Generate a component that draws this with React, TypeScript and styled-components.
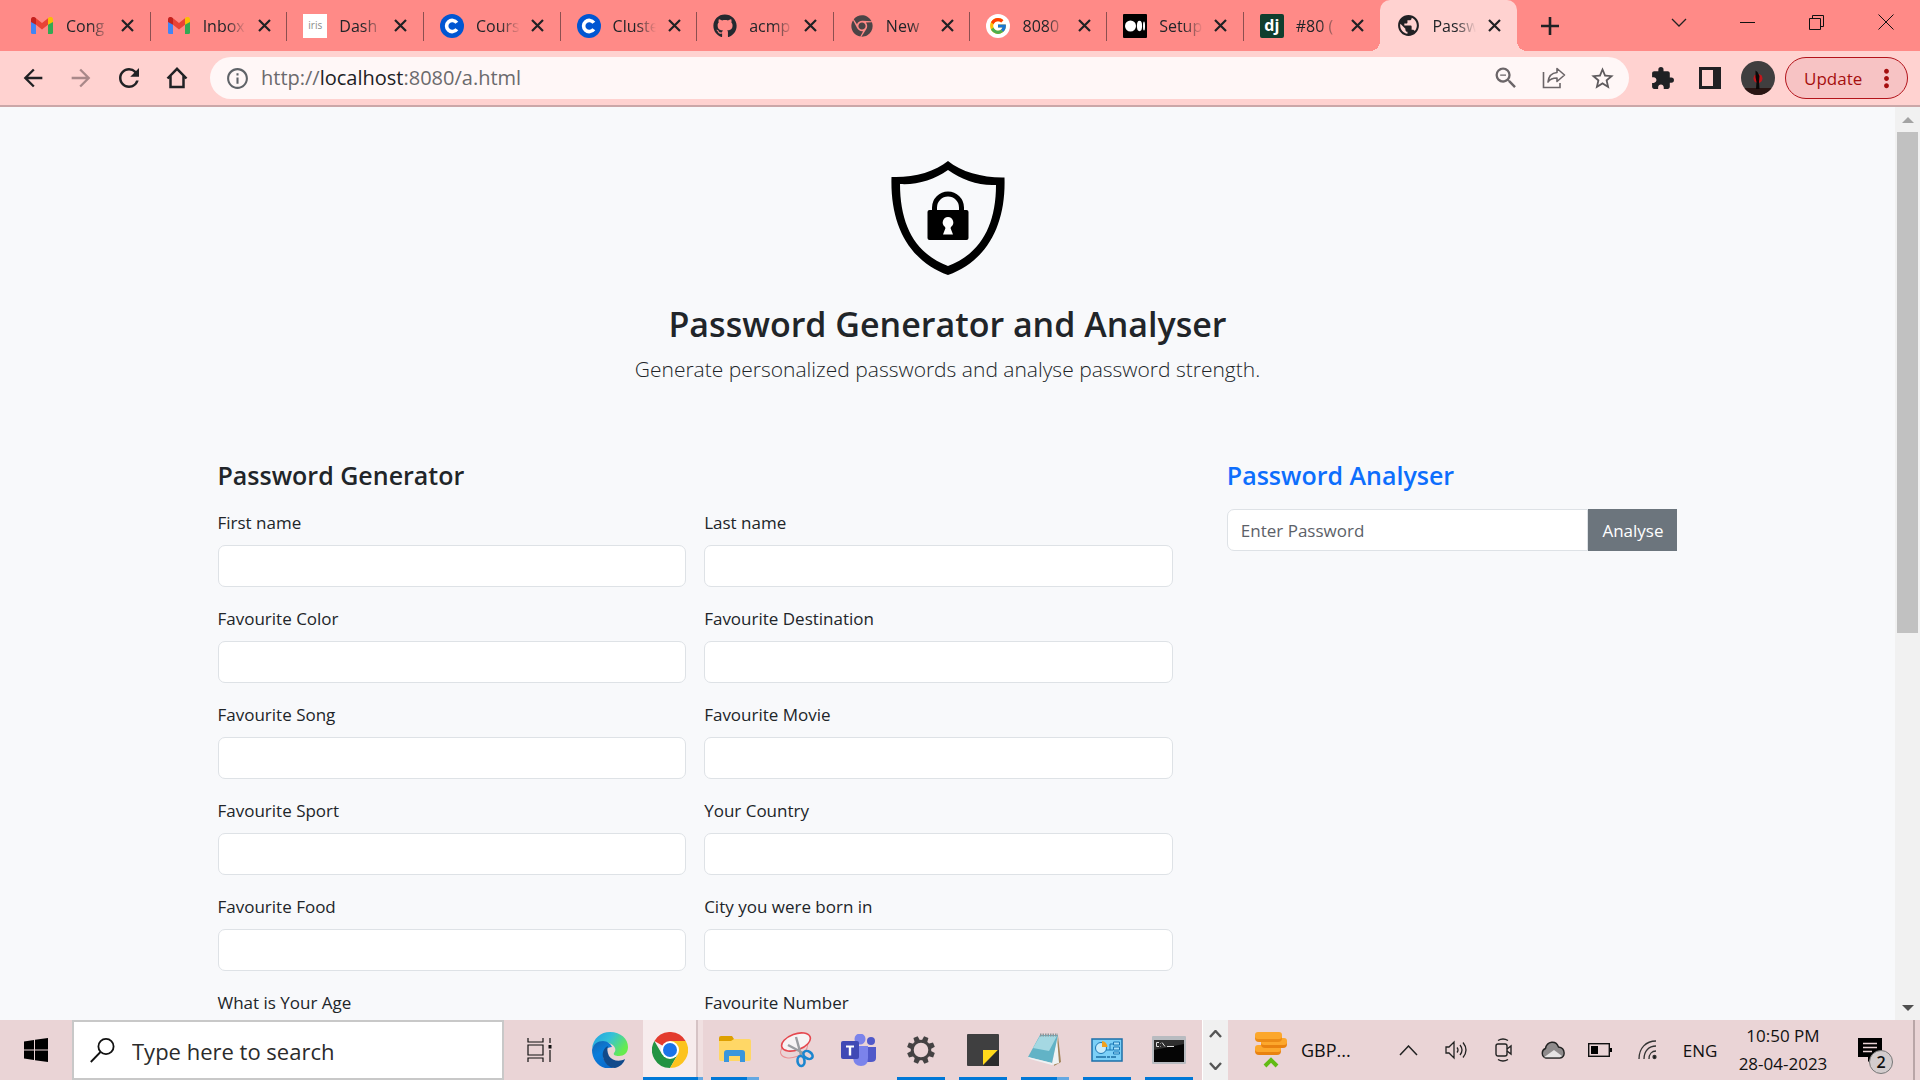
import React from 'react';
import styled, { createGlobalStyle, css } from 'styled-components';
import { FaGithub, FaChrome } from 'react-icons/fa';
import { FcGoogle } from 'react-icons/fc';
import {
  MdArrowBack, MdArrowForward, MdRefresh, MdInfoOutline, MdZoomOut,
  MdStarOutline, MdExtension, MdPublic, MdMoreVert,
} from 'react-icons/md';

const Global = createGlobalStyle`
  *, *::before, *::after { box-sizing: border-box; }
  body { margin: 0; overflow: hidden; font-family: "Open Sans", "Noto Sans", sans-serif; color: #212529; }
  button, input { font: inherit; color: inherit; }
  button { border: 0; padding: 0; background: none; cursor: pointer; }
  svg { display: block; flex: none; }
`;

const Screen = styled.div`
  display: flex;
  flex-direction: column;
  height: 100vh;
`;

/* ---------- browser chrome ---------- */
const TabStrip = styled.div`
  display: flex;
  align-items: stretch;
  height: 51px;
  padding-left: 14px;
  background: #ff8a87;
`;
const Tabs = styled.div`
  display: flex;
  flex: 0 1 1503px;
  min-width: 0;
`;
const Tab = styled.div<{ $active?: boolean; $divider?: boolean }>`
  position: relative;
  display: flex;
  align-items: center;
  flex: 1 1 0;
  min-width: 0;
  padding: 0 11px 0 16px;
  ${p => p.$divider && css`
    &::after {
      content: "";
      position: absolute;
      right: 0;
      top: 12px;
      bottom: 10px;
      width: 1px;
      background: #8c4f50;
    }
  `}
  ${p => p.$active && css`
    background: #ffd2d0;
    border-radius: 10px 10px 0 0;
    &::before, &::after {
      content: "";
      position: absolute;
      bottom: 0;
      width: 10px;
      height: 10px;
    }
    &::before { left: -10px; background: radial-gradient(circle at 0 0, transparent 10px, #ffd2d0 10px); }
    &::after { right: -10px; background: radial-gradient(circle at 100% 0, transparent 10px, #ffd2d0 10px); }
  `}
`;
const TabButton = styled.button`
  display: flex;
  align-items: center;
  gap: 12px;
  flex: 1;
  min-width: 0;
  padding-right: 6px;
  font-size: 16px;
  line-height: 24px;
  text-align: left;
`;
const Favicon = styled.span`
  display: flex;
  justify-content: center;
  width: 24px;
  flex: none;
`;
const TabTitle = styled.span`
  flex: 1;
  overflow: hidden;
  white-space: nowrap;
  mask-image: linear-gradient(90deg, #000 55%, transparent);
`;
const IconButton = styled.button<{ $w?: number; $dim?: boolean }>`
  display: flex;
  align-items: center;
  justify-content: center;
  flex: none;
  width: ${p => p.$w ?? 48}px;
  color: ${p => (p.$dim ? '#a98889' : '#202124')};
`;
const IrisMark = styled.span`
  width: 24px;
  height: 24px;
  background: #fff;
  color: #8a8a8a;
  font-size: 10px;
  line-height: 22px;
  text-align: center;
`;
const LetterMark = styled.span<{ $bg: string }>`
  width: 24px;
  height: 24px;
  border-radius: 2px;
  background: ${p => p.$bg};
  color: #fff;
  font-size: 16px;
  font-weight: 700;
  line-height: 22px;
  text-align: center;
`;
const WindowControls = styled.div`
  display: flex;
  height: 44px;
  margin-left: auto;
`;

const Toolbar = styled.div`
  display: flex;
  align-items: center;
  height: 56px;
  padding: 0 12px 0 9px;
  background: #ffd2d0;
  border-bottom: 2px solid #cba7a8;
`;
const AddressBar = styled.div`
  display: flex;
  align-items: center;
  flex: 1;
  height: 42px;
  margin: 0 9px;
  padding: 0 3px 0 15px;
  border-radius: 21px;
  background: #fff7f7;
`;
const Url = styled.div`
  flex: 1;
  padding-left: 11px;
  color: #6b6a6d;
  font-size: 20px;
  line-height: 28px;
  outline: none;
  span { color: #202124; }
`;
const Avatar = styled.span`
  display: block;
  width: 34px;
  height: 34px;
  border-radius: 50%;
  overflow: hidden;
`;
const UpdateButton = styled.button`
  display: flex;
  align-items: center;
  justify-content: space-between;
  width: 123px;
  height: 42px;
  padding: 0 6px 0 18px;
  margin-left: 3px;
  border: 1px solid #b3141b;
  border-radius: 21px;
  background: #f7c3c4;
  color: #a50e0e;
  font-size: 17px;
`;

/* ---------- web page ---------- */
const Viewport = styled.div`
  display: flex;
  flex: 1;
  min-height: 0;
`;
const Page = styled.main`
  flex: 1;
  min-width: 0;
  overflow: hidden;
  background: #f8f9fb;
`;
const Container = styled.div`
  max-width: 1496px;
  margin: 0 auto;
  padding: 0 18px;
`;
const Hero = styled.header`
  display: flex;
  flex-direction: column;
  align-items: center;
  padding: 54px 0 72px;
  text-align: center;
`;
const Title = styled.h1`
  margin: 27px 0 6px;
  font-size: 34px;
  font-weight: 600;
  line-height: 44px;
`;
const Lead = styled.p`
  margin: 0;
  font-size: 21px;
  font-weight: 300;
  line-height: 34px;
`;
const Columns = styled.div`
  display: grid;
  grid-template-columns: repeat(12, minmax(0, 1fr));
  gap: 54px;
`;
const Column = styled.section<{ $span: number }>`
  grid-column: span ${p => p.$span};
`;
const Heading = styled.h2<{ $accent?: boolean }>`
  margin: 0 0 17px;
  font-size: 25px;
  font-weight: 600;
  line-height: 34px;
  color: ${p => (p.$accent ? '#0d6efd' : 'inherit')};
`;
const Fields = styled.form`
  display: grid;
  grid-template-columns: 1fr 1fr;
  gap: 18px;
`;
const Field = styled.div`
  display: flex;
  flex-direction: column;
  gap: 9px;
`;
const Label = styled.label`
  font-size: 17px;
  line-height: 27px;
`;
const Input = styled.input`
  width: 100%;
  height: 42px;
  padding: 0 13px;
  border: 1px solid #dee2e6;
  border-radius: 7px;
  background: #fff;
  font-size: 17px;
  outline: none;
  &::placeholder { color: #5c6168; opacity: 1; }
`;
const InputGroup = styled.form`
  display: flex;
  ${Input} { flex: 1; min-width: 0; border-radius: 7px 0 0 7px; }
`;
const AnalyseButton = styled.button`
  padding: 0 14px;
  background: #6c757d;
  color: #fff;
  font-size: 17px;
`;
const Scrollbar = styled.div`
  display: flex;
  flex-direction: column;
  align-items: center;
  width: 25px;
  padding: 0 2px;
  background: #f1f1f1;
`;
const ScrollArrow = styled.button`
  display: flex;
  align-items: center;
  justify-content: center;
  width: 100%;
  height: 25px;
`;
const ScrollTrack = styled.div`
  flex: 1;
  width: 100%;
`;
const ScrollThumb = styled.div`
  height: 58%;
  background: #c1c1c1;
`;

/* ---------- taskbar ---------- */
const Taskbar = styled.footer`
  display: flex;
  align-items: stretch;
  height: 60px;
  background: #ead4d6;
  color: #111;
`;
const SearchBox = styled.label`
  display: flex;
  align-items: center;
  width: 432px;
  gap: 17px;
  padding: 0 16px;
  border: 2px solid #c8c8c8;
  background: #fff;
  input {
    flex: 1;
    min-width: 0;
    border: 0;
    padding: 2px 0 0;
    outline: none;
    background: none;
    font-size: 22px;
  }
  input::placeholder { color: #2b2b2b; opacity: 1; }
`;
const Apps = styled.div`
  display: flex;
  gap: 2px;
`;
const AppButton = styled.button<{ $state?: 'active' | 'open' | 'multi' }>`
  display: flex;
  align-items: center;
  justify-content: center;
  width: 60px;
  padding: 0 6px;
  background-repeat: no-repeat;
  background-position: center bottom;
  background-size: 48px 3px;
  ${p => p.$state === 'open' && css`background-image: linear-gradient(#0078d7, #0078d7);`}
  ${p => p.$state === 'multi' && css`background-image: linear-gradient(90deg, #0078d7 75%, #64a8e2 75%);`}
  ${p => p.$state === 'active' && css`
    background-image:
      linear-gradient(90deg, #0078d7 92%, #64a8e2 92%),
      linear-gradient(90deg, #f7eced 89%, #d6c3c5 89%, #d6c3c5 92%, #f0e0e1 92%);
    background-size: 100% 3px, 100% 100%;
    padding: 0 12px 0 6px;
  `}
`;
const AppScroll = styled.div`
  display: flex;
  flex-direction: column;
  justify-content: space-between;
  width: 26px;
  margin-left: 3px;
  background: #f0f0f0;
  border-left: 1px solid #fff;
`;
const AppScrollButton = styled.button`
  display: flex;
  align-items: center;
  justify-content: center;
  height: 28px;
`;
const Currency = styled.button`
  display: flex;
  align-items: center;
  gap: 13px;
  margin-left: 26px;
  font-size: 18px;
`;
const Tray = styled.div`
  display: flex;
  align-items: stretch;
  margin-left: auto;
`;
const Clock = styled.button`
  width: 110px;
  font-size: 17px;
  line-height: 28px;
  white-space: nowrap;
`;
const Language = styled.button`
  width: 56px;
  font-size: 17px;
`;
const Notifications = styled.button`
  position: relative;
  display: flex;
  align-items: center;
  justify-content: center;
  width: 75px;
  padding-right: 11px;
`;
const Badge = styled.span`
  position: absolute;
  right: 20px;
  bottom: 6px;
  width: 24px;
  height: 24px;
  border: 1px solid #777;
  border-radius: 50%;
  background: #d3cccd;
  font-size: 16px;
  font-weight: 600;
  line-height: 22px;
  text-align: center;
`;
const ShowDesktop = styled.button`
  width: 7px;
  border-left: 2px solid #b9a5a7;
`;

/* ---------- drawings ---------- */
const CloseMark = () => (
  <svg width="13" height="13" viewBox="0 0 13 13"><path d="M1 1l11 11M12 1 1 12" stroke="#202124" strokeWidth="2.200" /></svg>
);
const PlusMark = () => (
  <svg width="18" height="18" viewBox="0 0 18 18"><path d="M9 0v18M0 9h18" stroke="#202124" strokeWidth="2.600" /></svg>
);
const HomeMark = () => (
  <svg width="22" height="22" viewBox="0 0 22 22">
    <path d="M1.500 11.500 11 1.800l9.500 9.700M4.500 9v11h13V9" fill="none" stroke="#202124" strokeWidth="2.500" />
  </svg>
);
const Gmail = () => (
  <svg width="22" height="17" viewBox="0 0 22 17">
    <path d="M0 3v12.500Q0 17 1.500 17H5V7.500L2.500 3z" fill="#4285f4" />
    <path d="M22 3v12.500q0 1.500-1.500 1.500H17V7.500L19 3z" fill="#34a853" />
    <path d="M5 1.200 11 6l6-4.800v6.600L11 12.500 5 7.800z" fill="#ea4335" />
    <path d="M0 5.500V2.400C0 .2 2.500-.8 4.200.5L5 1.200v6.600L0 5z" fill="#c5221f" />
    <path d="M22 5.500V2.400C22 .2 19.500-.8 17.800.5l-.8.700v6.600L22 5z" fill="#fbbc04" />
  </svg>
);
const Coursera = () => (
  <svg width="24" height="24" viewBox="0 0 24 24">
    <circle cx="12" cy="12" r="12" fill="#0056d2" />
    <path d="M16.800 8.800a5.600 5.600 0 1 0 0 6.400" fill="none" stroke="#fff" strokeWidth="3.600" />
  </svg>
);
const Medium = () => (
  <svg width="24" height="24" viewBox="0 0 24 24">
    <rect width="24" height="24" rx="1" fill="#000" />
    <circle cx="7.500" cy="12" r="5.500" fill="#fff" />
    <ellipse cx="16.500" cy="12" rx="2.600" ry="5.200" fill="#fff" />
    <ellipse cx="21" cy="12" rx="1" ry="4.600" fill="#fff" />
  </svg>
);
const Google = () => (
  <svg width="24" height="24" viewBox="0 0 24 24">
    <circle cx="12" cy="12" r="12" fill="#fff" />
    <g transform="translate(2.500 2.500)"><FcGoogle size={19} /></g>
  </svg>
);
const Share = () => (
  <svg width="24" height="24" viewBox="0 0 24 24" fill="none" stroke="#6b6568" strokeWidth="1.600">
    <path d="M1.500 6v15.500h16.500v-4.500" />
    <path d="M15 2.500 22.500 9 15 15.500V12c-4 0-7 1-9 4 .5-5 3.500-9 9-9.500z" strokeLinejoin="round" />
  </svg>
);
const SidePanel = () => (
  <svg width="22" height="22" viewBox="0 0 22 22">
    <path d="M0 0h22v22H0zM3 3v16h11V3z" fill="#202124" fillRule="evenodd" />
  </svg>
);
const AvatarArt = () => (
  <svg width="34" height="34" viewBox="0 0 34 34">
    <rect width="34" height="34" fill="#403e3f" />
    <path d="M0 27h34v7H0z" fill="#2a1513" />
    <circle cx="17" cy="17.500" r="4.500" fill="#c2161c" />
    <path d="M14.500 9.500l2 1.500 2 4-.5 6 .5 7h-3.500l.5-7-1-5z" fill="#0b0808" />
  </svg>
);
const ShieldLogo = () => (
  <svg width="114" height="114" viewBox="0 0 114 114" role="img" aria-label="Shield with padlock">
    <path d="M57 0C70 11 93 17 113.500 16.500 115 64 96 100 57 114 18 100-1 64 .5 16 21 17 44 11 57 0zM57 9C43 19 26 24 9 23c0 42 16 70 48 82 32-12 48-40 48-81C88 25 71 19 57 9z" fill="#000" fillRule="evenodd" />
    <path d="M43.500 51V46.500a13.500 13.500 0 0 1 27 0V51" fill="none" stroke="#000" strokeWidth="5" />
    <rect x="36.500" y="49" width="41" height="30" rx="2" fill="#000" />
    <path d="M57 56a5.500 5.500 0 0 1 3.200 9.800L59.500 67l2.500 6.500H52L54.500 67l-.7-1.200A5.500 5.500 0 0 1 57 56z" fill="#fff" />
  </svg>
);
const Chevron = ({ up, w = 16, h = 9, sw = 1.5, color = '#222' }: { up?: boolean; w?: number; h?: number; sw?: number; color?: string }) => (
  <svg width={w} height={h} viewBox={`0 0 ${w} ${h}`} fill="none" stroke={color} strokeWidth={sw}>
    <path d={up ? `M1 ${h - 1} ${w / 2} 1 ${w - 1} ${h - 1}` : `M1 1 ${w / 2} ${h - 1} ${w - 1} 1`} />
  </svg>
);
const Triangle = ({ up, color }: { up?: boolean; color: string }) => (
  <svg width="12" height="6" viewBox="0 0 12 6"><path d={up ? 'M0 6 6 0l6 6z' : 'M0 0h12L6 6z'} fill={color} /></svg>
);
const WindowsLogo = () => (
  <svg width="24" height="24" viewBox="0 0 24 24">
    <path d="M0 3.400 10 2v9.500H0zM11 1.800 24 0v11.500H11zM0 12.500h10V22L0 20.600zM11 12.500h13V24l-13-1.800z" />
  </svg>
);
const SearchGlass = () => (
  <svg width="25" height="25" viewBox="0 0 25 25" fill="none" stroke="#111" strokeWidth="1.800">
    <circle cx="16" cy="8.500" r="7.600" /><path d="M10.500 14 .8 24" />
  </svg>
);
const TaskView = () => (
  <svg width="26" height="24" viewBox="0 0 26 24" fill="none" stroke="#111" strokeWidth="1.200">
    <path d="M1 0v4h15V0M1 24v-4h15v4M1 7h15v10H1zM23 0v5M23 12v12" /><path d="M21.500 7h3v3.500h-3z" fill="#111" stroke="none" />
  </svg>
);
const Edge = () => (
  <svg width="36" height="36" viewBox="0 0 36 36">
    <defs>
      <linearGradient id="edgeTop" x1="0" y1="0" x2="1" y2="0.500">
        <stop offset="0" stopColor="#1f9fe4" /><stop offset="0.500" stopColor="#35c1d8" /><stop offset="1" stopColor="#66eb4e" />
      </linearGradient>
      <linearGradient id="edgeSide" x1="0" y1="0" x2="0.500" y2="1">
        <stop offset="0" stopColor="#1565b0" /><stop offset="0.500" stopColor="#0a7ddb" /><stop offset="1" stopColor="#0a6bcb" />
      </linearGradient>
    </defs>
    <path d="M0 17C1 6 9 0 18 0c11 0 18 7 18 15 0 6-4 9-9 9-4 0-6-1-5-3 3-3 1-8-5-10C9 9 2 11 0 17z" fill="url(#edgeTop)" />
    <path d="M0 18c1-6 6-9 11-9 4 0 8 3 9 6-5 0-9 4-9 8 0 6 5 11 11 13C9 39 0 29 0 18z" fill="url(#edgeSide)" />
    <path d="M16 14c-4 2-6 6-5 11 1 6 6 11 12 11 5-1 9-5 10-9-5 3-13 2-16-3-2-4-2-8-1-10z" fill="#114a8b" />
  </svg>
);
const ChromeColor = () => (
  <svg width="36" height="36" viewBox="0 0 36 36">
    <path d="M18 18 2.400 9A18 18 0 0 1 33.600 9z" fill="#e33b2e" />
    <path d="M2.400 9A18 18 0 0 0 18 36l7.800-13.500L10.200 22.500z" fill="#229342" />
    <path d="M18 9h15.600A18 18 0 0 1 18 36l7.800-13.500z" fill="#fcc31e" />
    <circle cx="18" cy="18" r="9" fill="#fff" /><circle cx="18" cy="18" r="7" fill="#1a73e8" />
  </svg>
);
const Folder = () => (
  <svg width="32" height="28" viewBox="0 0 32 28">
    <path d="M0 2q0-2 2-2h11l2 3v5H0z" fill="#dea000" />
    <path d="M0 5h12l3-2h15q2 0 2 2v18q0 2-2 2H2q-2 0-2-2z" fill="#ffd766" />
    <path d="M5 26V17q0-3 3-3h15q3 0 3 3v9h-5v-6H10v6z" fill="#3a96dd" />
  </svg>
);
const Snip = () => (
  <svg width="34" height="36" viewBox="0 0 34 36">
    <ellipse cx="14" cy="17" rx="14" ry="8" fill="none" stroke="#ea8f93" strokeWidth="1" transform="rotate(-20 14 17)" />
    <ellipse cx="16" cy="10" rx="15" ry="8" fill="#f6f4f5" stroke="#e5484f" strokeWidth="1.600" transform="rotate(-20 16 10)" />
    <path d="M16 5l5 18M8 13l15 8" stroke="#9a9da1" strokeWidth="2.400" />
    <ellipse cx="28" cy="23" rx="5" ry="3.500" fill="none" stroke="#1c86cf" strokeWidth="2.600" transform="rotate(35 28 23)" />
    <ellipse cx="21" cy="29" rx="3.500" ry="5" fill="none" stroke="#1c86cf" strokeWidth="2.600" transform="rotate(-8 21 29)" />
  </svg>
);
const Teams = () => (
  <svg width="36" height="32" viewBox="0 0 36 32">
    <circle cx="30" cy="7" r="4" fill="#5059c9" /><path d="M25 13h10v11q0 4-5 4h-5z" fill="#5059c9" />
    <circle cx="19" cy="5" r="5.500" fill="#7b83eb" /><path d="M12 12h15v12q0 8-7 8t-8-8z" fill="#7b83eb" />
    <rect y="7" width="18" height="18" rx="2" fill="#4049b5" />
    <path d="M5 11.500h8v2h-2.800v8H7.800v-8H5z" fill="#fff" />
  </svg>
);
const Gear = () => (
  <svg width="28" height="28" viewBox="-14 -14 28 28" fill="#444243">
    {[22, 67, 112, 157, 202, 247, 292, 337].map(a => (
      <path key={a} d="M-3-8-2.300-14h4.600L3-8z" transform={`rotate(${a})`} />
    ))}
    <circle r="8.800" fill="none" stroke="#444243" strokeWidth="3" />
  </svg>
);
const StickyNote = () => (
  <svg width="32" height="32" viewBox="0 0 32 32">
    <rect width="32" height="32" rx="1" fill="#3f3f40" /><path d="M16 16h15L16 31z" fill="#ffd91b" /><path d="M16 32 31 16h1v16z" fill="#2b2b2c" />
  </svg>
);
const Notepad = () => (
  <svg width="34" height="34" viewBox="0 0 34 34">
    <path d="M30 3l3 26-7 4z" fill="#a3845a" />
    <path d="M29 4l2 26-7 2z" fill="#eef3f4" />
    <path d="M12 2h18l-6 28L0 24z" fill="#62b3c6" /><path d="M12 3h17L21 18 5 15z" fill="#a5d8e2" />
    <path d="M0 24l24 6v2L2 26z" fill="#eef3f4" /><path d="M12 2h18" stroke="#8c9498" strokeWidth="3" strokeDasharray="1.500 1" />
  </svg>
);
const ControlPanel = () => (
  <svg width="32" height="24" viewBox="0 0 32 24">
    <rect x="1" y="1" width="30" height="22" fill="#7cd0f7" stroke="#1d6fa9" strokeWidth="1.500" />
    <circle cx="10" cy="10" r="5.500" fill="#c8ecfb" stroke="#1b78b6" /><path d="M11 9V3a6 6 0 0 1 5.500 6z" fill="#f1a11e" />
    <path d="M15 12h4V6h3M19 12h3" stroke="#1b78b6" fill="none" /><path d="M22.500 4h6v3h-6zM22.500 9h6v3h-6zM22.500 14h6v2h-6z" fill="#a8e1fa" stroke="#1b78b6" />
    <path d="M5 19h20" stroke="#1b6da4" strokeWidth="1.500" strokeDasharray="10 1 3 1" />
  </svg>
);
const Terminal = () => (
  <svg width="34" height="28" viewBox="0 0 34 28">
    <rect width="34" height="28" rx="1" fill="#b8bbc0" /><rect x="2" y="4" width="30" height="22" fill="#050505" />
    <path d="M2 14 32 8V4H2z" fill="#2e2e2e" />
    <path d="M7 6.500H4.500v4H7M8.500 7.500v.5M8.500 10v.5M10 6.500l3 4M15 10.500H22" stroke="#ddd" fill="none" />
  </svg>
);
const Coins = () => (
  <svg width="34" height="36" viewBox="0 0 34 36">
    <rect x="1" y="15" width="26" height="8" rx="4" fill="#e98210" /><rect x="1" y="13" width="26" height="7" rx="3" fill="#fca72c" />
    <rect x="7" y="8" width="26" height="8" rx="4" fill="#e98210" /><rect x="7" y="6" width="26" height="7" rx="3" fill="#fca72c" />
    <rect x="1" y="2" width="27" height="8" rx="4" fill="#ec8b16" /><rect x="1" y="0" width="27" height="7" rx="3" fill="#fca72c" />
    <path d="M11 34 17 28l6 6" fill="none" stroke="#62bb14" strokeWidth="4" />
  </svg>
);
const Volume = () => (
  <svg width="23" height="20" viewBox="0 0 23 20" fill="none" stroke="#222" strokeWidth="1.300">
    <path d="M1 7h3l5-5v16l-5-5H1zM12 7.500q2 2.500 0 5M15 5q4 5 0 10M18 2.500q6 7.500 0 15" />
  </svg>
);
const MeetNow = () => (
  <svg width="18" height="24" viewBox="0 0 18 24" fill="none" stroke="#222" strokeWidth="1.400">
    <rect x="1" y="6" width="11" height="12" rx="2" /><path d="M12 11l4-3v8l-4-3M3 2.500q5-3 10 0M3 21.500q5 3 10 0" />
  </svg>
);
const Cloud = () => (
  <svg width="25" height="18" viewBox="0 0 25 18">
    <path d="M6 17A5 5 0 0 1 5.500 7.500C7 0 16-1 18.500 6 26 7 25.500 17 20 17z" fill="#8f8b8c" stroke="#222" strokeWidth="1.400" />
    <path d="M4 16.300 14 9l8 6-2 1.300z" fill="#e6e4e4" />
  </svg>
);
const Battery = () => (
  <svg width="24" height="14" viewBox="0 0 24 14">
    <rect x="0.700" y="0.700" width="20.600" height="12.600" fill="none" stroke="#111" strokeWidth="1.400" /><rect x="3" y="3" width="7" height="8" /><path d="M22 5h2v4h-2z" />
  </svg>
);
const Wifi = () => (
  <svg width="20" height="20" viewBox="0 0 20 20" fill="none" stroke="#333" strokeWidth="1.300">
    <path d="M1 19C1 8 8 1 18 1M6 19c0-8 5-13 12-13M11 19c0-5 3-8 7-8" /><circle cx="16.500" cy="17" r="1.500" fill="#111" />
  </svg>
);
const Message = () => (
  <svg width="24" height="24" viewBox="0 0 24 24">
    <path d="M0 0h24v19h-9l-5 5v-5H0z" /><path d="M5 5.500h14M5 9.500h14M5 13.500h9" stroke="#ead4d6" strokeWidth="1.500" />
  </svg>
);

const tabs = [
  { title: 'Cong', icon: <Gmail /> },
  { title: 'Inbox', icon: <Gmail /> },
  { title: 'Dash', icon: <IrisMark>iris</IrisMark> },
  { title: 'Cours', icon: <Coursera /> },
  { title: 'Cluste', icon: <Coursera /> },
  { title: 'acmp', icon: <FaGithub size={24} color="#24292f" /> },
  { title: 'New', icon: <FaChrome size={22} color="#4b4446" /> },
  { title: '8080', icon: <Google /> },
  { title: 'Setup', icon: <Medium /> },
  { title: '#80 (', icon: <LetterMark $bg="#103e2e">dj</LetterMark> },
  { title: 'Passw', icon: <MdPublic size={25} color="#202124" /> },
];

const fields = [
  'First name', 'Last name', 'Favourite Color', 'Favourite Destination', 'Favourite Song', 'Favourite Movie',
  'Favourite Sport', 'Your Country', 'Favourite Food', 'City you were born in', 'What is Your Age', 'Favourite Number',
];

const apps: { name: string; icon: React.ReactNode; state?: 'active' | 'open' | 'multi' }[] = [
  { name: 'Google Chrome', icon: <ChromeColor />, state: 'active' },
  { name: 'File Explorer', icon: <Folder />, state: 'multi' },
  { name: 'Snipping Tool', icon: <Snip /> },
  { name: 'Teams', icon: <Teams /> },
  { name: 'Settings', icon: <Gear />, state: 'open' },
  { name: 'Sticky Notes', icon: <StickyNote />, state: 'open' },
  { name: 'Notepad', icon: <Notepad />, state: 'multi' },
  { name: 'Control Panel', icon: <ControlPanel />, state: 'open' },
  { name: 'Command Prompt', icon: <Terminal />, state: 'open' },
];

export default function App() {
  return (
    <Screen>
      <Global />
      <TabStrip>
        <Tabs>
          {tabs.map((t, i) => (
            <Tab key={t.title} $active={i === tabs.length - 1} $divider={i < tabs.length - 2}>
              <TabButton>
                <Favicon>{t.icon}</Favicon>
                <TabTitle>{t.title}</TabTitle>
              </TabButton>
              <IconButton $w={24} aria-label="Close tab"><CloseMark /></IconButton>
            </Tab>
          ))}
        </Tabs>
        <IconButton $w={66} aria-label="New tab"><PlusMark /></IconButton>
        <WindowControls>
          <IconButton $w={68} aria-label="Search tabs"><Chevron w={16} h={9} sw={1.3} /></IconButton>
          <IconButton $w={69} aria-label="Minimize">
            <svg width="15" height="15" viewBox="0 0 15 15"><path d="M0 7.500h15" stroke="#111" /></svg>
          </IconButton>
          <IconButton $w={69} aria-label="Restore">
            <svg width="15" height="15" viewBox="0 0 15 15" fill="none" stroke="#111"><path d="M.5 3.500h11v11H.5zM3.500 3V.5h11v11H12" /></svg>
          </IconButton>
          <IconButton $w={69} aria-label="Close window">
            <svg width="16" height="16" viewBox="0 0 16 16"><path d="M.5.5l15 15M15.500.5l-15 15" stroke="#111" /></svg>
          </IconButton>
        </WindowControls>
      </TabStrip>
      <Toolbar>
        <IconButton aria-label="Back"><MdArrowBack size={28} /></IconButton>
        <IconButton $dim aria-label="Forward"><MdArrowForward size={28} /></IconButton>
        <IconButton aria-label="Reload"><MdRefresh size={30} /></IconButton>
        <IconButton aria-label="Home"><HomeMark /></IconButton>
        <AddressBar>
          <MdInfoOutline size={25} color="#5f6368" />
          <Url role="textbox" aria-label="Address">http://<span>localhost</span>:8080/a.html</Url>
          <IconButton aria-label="Zoom"><MdZoomOut size={28} color="#6b6568" /></IconButton>
          <IconButton aria-label="Share"><Share /></IconButton>
          <IconButton aria-label="Bookmark"><MdStarOutline size={27} color="#5f5b5e" /></IconButton>
        </AddressBar>
        <IconButton aria-label="Extensions"><MdExtension size={25} /></IconButton>
        <IconButton aria-label="Side panel"><SidePanel /></IconButton>
        <IconButton aria-label="Profile"><Avatar><AvatarArt /></Avatar></IconButton>
        <UpdateButton>Update<MdMoreVert size={29} /></UpdateButton>
      </Toolbar>

      <Viewport>
        <Page>
          <Container>
            <Hero>
              <ShieldLogo />
              <Title>Password Generator and Analyser</Title>
              <Lead>Generate personalized passwords and analyse password strength.</Lead>
            </Hero>
            <Columns>
              <Column $span={8}>
                <Heading>Password Generator</Heading>
                <Fields>
                  {fields.map(f => {
                    const id = f.toLowerCase().replace(/ /g, '-');
                    return (
                      <Field key={f}>
                        <Label htmlFor={id}>{f}</Label>
                        <Input id={id} type="text" />
                      </Field>
                    );
                  })}
                </Fields>
              </Column>
              <Column $span={4}>
                <Heading $accent>Password Analyser</Heading>
                <InputGroup>
                  <Input type="text" placeholder="Enter Password" aria-label="Enter Password" />
                  <AnalyseButton type="button">Analyse</AnalyseButton>
                </InputGroup>
              </Column>
            </Columns>
          </Container>
        </Page>
        <Scrollbar>
          <ScrollArrow aria-label="Scroll up"><Triangle up color="#a3a3a3" /></ScrollArrow>
          <ScrollTrack><ScrollThumb /></ScrollTrack>
          <ScrollArrow aria-label="Scroll down"><Triangle color="#505050" /></ScrollArrow>
        </Scrollbar>
      </Viewport>

      <Taskbar>
        <IconButton $w={72} aria-label="Start"><WindowsLogo /></IconButton>
        <SearchBox>
          <SearchGlass />
          <input type="text" placeholder="Type here to search" aria-label="Type here to search" />
        </SearchBox>
        <IconButton $w={72} aria-label="Task view"><TaskView /></IconButton>
        <IconButton $w={67} aria-label="Microsoft Edge"><Edge /></IconButton>
        <Apps>
          {apps.map(a => <AppButton key={a.name} $state={a.state} aria-label={a.name}>{a.icon}</AppButton>)}
        </Apps>
        <AppScroll>
          <AppScrollButton aria-label="Previous apps"><Chevron up w={13} h={8} sw={2.4} color="#555" /></AppScrollButton>
          <AppScrollButton aria-label="More apps"><Chevron w={13} h={8} sw={2.4} color="#555" /></AppScrollButton>
        </AppScroll>
        <Currency><Coins />GBP...</Currency>
        <Tray>
          <IconButton aria-label="Show hidden icons"><Chevron up w={19} h={11} /></IconButton>
          <IconButton aria-label="Volume"><Volume /></IconButton>
          <IconButton aria-label="Meet now"><MeetNow /></IconButton>
          <IconButton aria-label="OneDrive"><Cloud /></IconButton>
          <IconButton aria-label="Battery"><Battery /></IconButton>
          <IconButton aria-label="Network"><Wifi /></IconButton>
          <Language>ENG</Language>
          <Clock>10:50 PM<br />28-04-2023</Clock>
          <Notifications aria-label="Notifications"><Message /><Badge>2</Badge></Notifications>
          <ShowDesktop aria-label="Show desktop" />
        </Tray>
      </Taskbar>
    </Screen>
  );
}
